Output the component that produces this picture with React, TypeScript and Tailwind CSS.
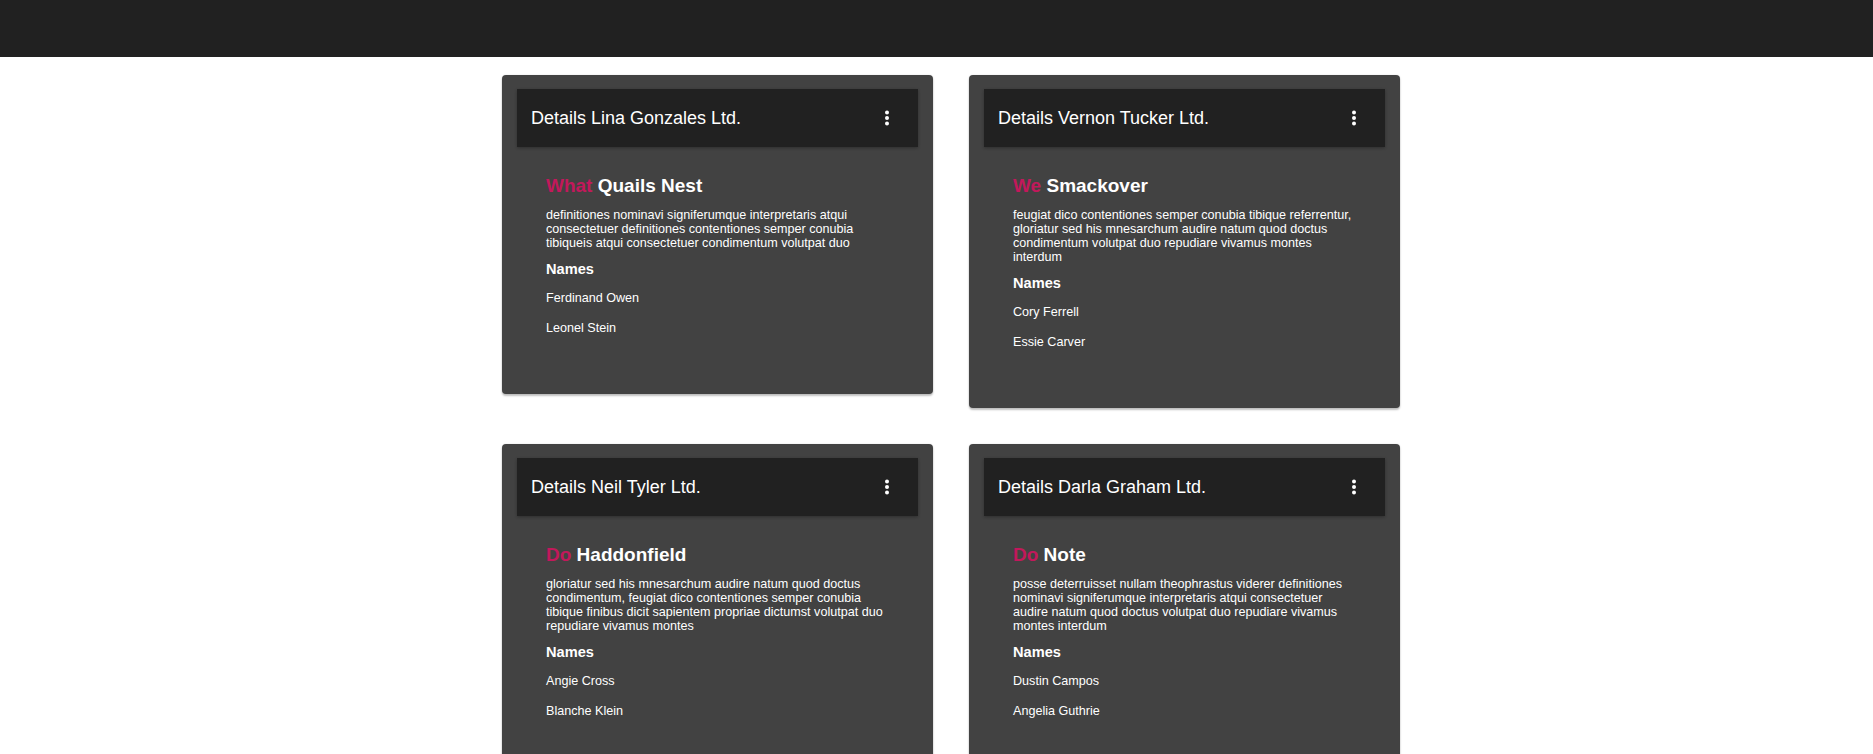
import React from "react";

type Detail = {
  company: string;
  verb: string;
  place: string;
  text: string;
  names: string[];
};

const details: Detail[] = [
  {
    company: "Details Lina Gonzales Ltd.",
    verb: "What",
    place: "Quails Nest",
    text: "definitiones nominavi signiferumque interpretaris atqui consectetuer definitiones contentiones semper conubia tibiqueis atqui consectetuer condimentum volutpat duo",
    names: ["Ferdinand Owen", "Leonel Stein"],
  },
  {
    company: "Details Vernon Tucker Ltd.",
    verb: "We",
    place: "Smackover",
    text: "feugiat dico contentiones semper conubia tibique referrentur, gloriatur sed his mnesarchum audire natum quod doctus condimentum volutpat duo repudiare vivamus montes interdum",
    names: ["Cory Ferrell", "Essie Carver"],
  },
  {
    company: "Details Neil Tyler Ltd.",
    verb: "Do",
    place: "Haddonfield",
    text: "gloriatur sed his mnesarchum audire natum quod doctus condimentum, feugiat dico contentiones semper conubia tibique finibus dicit sapientem propriae dictumst volutpat duo repudiare vivamus montes",
    names: ["Angie Cross", "Blanche Klein"],
  },
  {
    company: "Details Darla Graham Ltd.",
    verb: "Do",
    place: "Note",
    text: "posse deterruisset nullam theophrastus viderer definitiones nominavi signiferumque interpretaris atqui consectetuer audire natum quod doctus volutpat duo repudiare vivamus montes interdum",
    names: ["Dustin Campos", "Angelia Guthrie"],
  },
];

const MoreVert: React.FC = () => (
  <svg width="24" height="24" viewBox="0 0 24 24" fill="#ffffff">
    <circle cx="12" cy="6.5" r="2" />
    <circle cx="12" cy="12" r="2" />
    <circle cx="12" cy="17.5" r="2" />
  </svg>
);

const DetailCard: React.FC<{ d: Detail }> = ({ d }) => (
  <div className="w-[431px] bg-[#424242] rounded-[4px] shadow-[0_2px_2px_rgba(0,0,0,0.24),0_0_2px_rgba(0,0,0,0.12)] px-[15px] pt-[14px]">
    <div className="h-[58px] bg-[#212121] flex items-center justify-between pl-[14px] pr-[19px] shadow-[0_1px_3px_rgba(0,0,0,0.3)]">
      <span className="text-[18px] text-white">{d.company}</span>
      <MoreVert />
    </div>
    <div className="px-[29px] pt-[27px] pb-[59px] text-white">
      <h2 className="text-[19px] leading-[23px] font-bold">
        <span className="text-[#c2185b]">{d.verb}</span> {d.place}
      </h2>
      <p className="mt-[11px] text-[12.6px] leading-[14px]">{d.text}</p>
      <h3 className="mt-[11px] text-[14.6px] leading-[17px] font-bold">Names</h3>
      <ul className="mt-[13px] flex flex-col gap-[16px] text-[12.6px] leading-[14px]">
        {d.names.map((n) => (
          <li key={n}>{n}</li>
        ))}
      </ul>
    </div>
  </div>
);

export default function App() {
  return (
    <div className="min-h-screen bg-white font-['Liberation_Sans',Arial,sans-serif]">
      <div className="h-[57px] bg-[#212121]" />
      <div className="pt-[18px] pl-[502px] grid grid-cols-[431px_431px] gap-x-[36px] gap-y-[36px] items-start">
        {details.map((d) => (
          <DetailCard key={d.company} d={d} />
        ))}
      </div>
    </div>
  );
}
